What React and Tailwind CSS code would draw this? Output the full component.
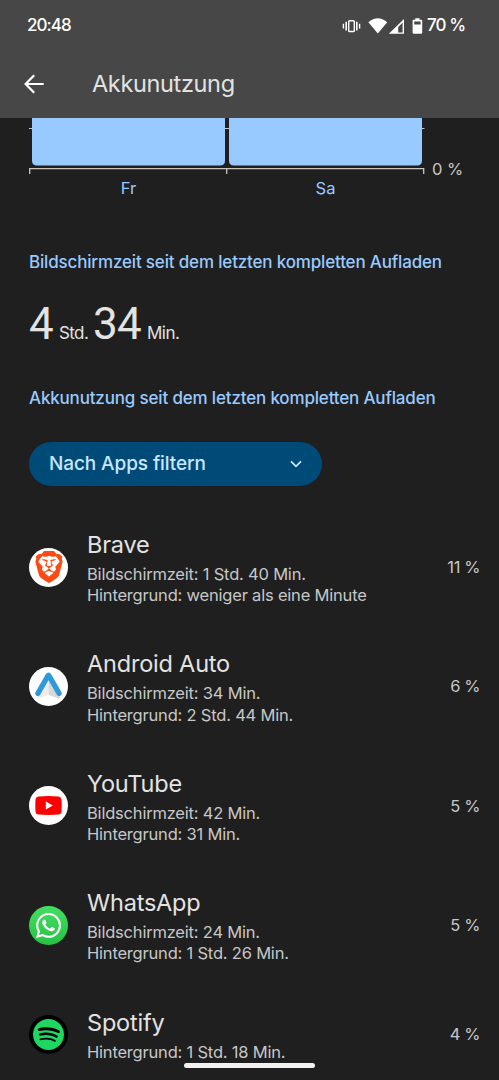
import { SiBrave, SiSpotify, SiWhatsapp } from "react-icons/si";

function BraveIcon() {
  return (
    <div className="flex size-[39px] items-center justify-center rounded-full bg-white">
      <SiBrave className="size-[32px] text-[#fb4a14]" />
    </div>
  );
}

function AutoIcon() {
  return (
    <svg className="size-[39px]" viewBox="0 0 39 39">
      <circle cx="19.5" cy="19.5" r="19.5" fill="#fff" />
      <path d="M19.5 13 8 30.2q-.3 1.6 1.2 1.3l10.3-3.6z" fill="#ececec" />
      <path d="M19.5 13 31 30.2q.3 1.6-1.2 1.3l-10.3-3.6z" fill="#d9d9d9" />
      <path d="M8.9 26.4 19.2 8.4q.3-.6.6 0l10.3 18" fill="none" stroke="#2d98da" strokeWidth="5.2" strokeLinecap="round" strokeLinejoin="round" />
    </svg>
  );
}

function YouTubeIcon() {
  return (
    <svg className="size-[39px]" viewBox="0 0 39 39">
      <circle cx="19.5" cy="19.5" r="19.5" fill="#fff" />
      <path d="M9.5 10.5Q19.5 9.7 29.5 10.5 32.2 10.8 32.5 13.6 33 19.5 32.5 25.4 32.2 28.2 29.5 28.5 19.5 29.3 9.5 28.5 6.8 28.2 6.5 25.4 6 19.5 6.5 13.6 6.8 10.8 9.5 10.5z" fill="#f00" />
      <path d="M16.8 15.4v8.2l7-4.1z" fill="#fff" />
    </svg>
  );
}

function WhatsAppIcon() {
  return (
    <div className="flex size-[39px] items-center justify-center rounded-full bg-linear-to-b from-[#43df62] to-[#25c244]">
      <SiWhatsapp className="size-[25px] text-white" />
    </div>
  );
}

function SpotifyIcon() {
  return (
    <div className="flex size-[39px] items-center justify-center rounded-full bg-black">
      <SiSpotify className="size-[31px] text-[#1ed760]" />
    </div>
  );
}

const apps = [
  { name: "Brave", lines: ["Bildschirmzeit: 1 Std. 40 Min.", "Hintergrund: weniger als eine Minute"], pct: "11 %", Icon: BraveIcon },
  { name: "Android Auto", lines: ["Bildschirmzeit: 34 Min.", "Hintergrund: 2 Std. 44 Min."], pct: "6 %", Icon: AutoIcon },
  { name: "YouTube", lines: ["Bildschirmzeit: 42 Min.", "Hintergrund: 31 Min."], pct: "5 %", Icon: YouTubeIcon },
  { name: "WhatsApp", lines: ["Bildschirmzeit: 24 Min.", "Hintergrund: 1 Std. 26 Min."], pct: "5 %", Icon: WhatsAppIcon },
  { name: "Spotify", lines: ["Hintergrund: 1 Std. 18 Min."], pct: "4 %", Icon: SpotifyIcon },
];

function StatusIcons() {
  return (
    <svg className="h-[20px] w-[84px]" viewBox="340 15 84 20" fill="#fff">
      <rect x="348.7" y="19.7" width="5.6" height="10.8" rx="0.8" fill="none" stroke="#fff" strokeWidth="1.4" />
      <path d="M345.4 20.8h1.6v8.6h-1.6zM342.7 22.8h1.4v4.6h-1.4zM356 20.8h1.6v8.6H356zM358.9 22.8h1.4v4.6h-1.4z" />
      <path d="M368.4 21.2Q377.8 13.5 387.2 21.2L377.8 32.6z" />
      <path fillRule="evenodd" d="M404 18v14.8h-15.2zM402.6 21.8l-4.4 4.3v5.3h4.4z" />
      <path fillRule="evenodd" d="M415.3 17.2h4.2v1.6h1.7q1 0 1 1v11.7q0 1.2-1 1.2h-7.6q-1 0-1-1.2V19.8q0-1 1-1h1.7zM414.2 20.4v3.2h6.4v-3.2z" />
    </svg>
  );
}

export default function App() {
  return (
    <div className="relative h-[1080px] w-[499px] overflow-hidden bg-[#1f1f1f] font-['Inter','Roboto',sans-serif] text-[#e3e3e3]">
      <header className="h-[118px] bg-[#474747]">
        <div className="flex h-[51px] items-center pl-[27px] text-white">
          <span className="w-[313px] text-[17px] font-medium tracking-[-0.95px]">20:48</span>
          <StatusIcons />
          <span className="pl-[3px] text-[17px] font-medium whitespace-nowrap tracking-[-0.9px]">70 %</span>
        </div>
        <div className="flex h-[66px] items-center pl-[24px]">
          <svg className="h-[20px] w-[20px]" viewBox="0 0 20 20" fill="none" stroke="#fff" strokeWidth="2.2">
            <path d="M19.7 10H2M10.2 1.2 1.6 10l8.6 8.8" />
          </svg>
          <h1 className="pl-[48px] text-[23.5px] leading-[30px] font-normal tracking-[-0.35px]">Akkunutzung</h1>
        </div>
      </header>

      <section className="h-[128px]">
        <div className="flex">
          <svg className="h-[60px] w-[432px]" viewBox="0 118 432 60">
            <path d="M29 128.5h3M225 128.5h4M422 128.5h2.5" stroke="#c9c6bf" strokeWidth="1.2" />
            <path d="M32 118h193v42.5q0 5-5 5H37q-5 0-5-5zM229 118h193v42.5q0 5-5 5H234q-5 0-5-5z" fill="#99caff" />
            <path d="M29.7 174v-5.4h394v5.4M226.7 168.6v5.4" fill="none" stroke="#c9c6bf" strokeWidth="1.3" />
          </svg>
          <span className="pt-[41px] text-[16.5px] leading-[20px] whitespace-nowrap text-[#c7c7c7]">0 %</span>
        </div>
        <div className="-mt-px flex h-[20px] pl-[30px] text-center text-[16.5px] leading-[20px] text-[#99caff]">
          <span className="w-[197px]">Fr</span>
          <span className="w-[197px]">Sa</span>
        </div>
      </section>

      <main className="pl-[29px]">
        <h2 className="h-[32px] text-[17px] leading-[32px] font-medium whitespace-nowrap tracking-[-0.17px] text-[#99caff]">Bildschirmzeit seit dem letzten kompletten Aufladen</h2>
        <p className="flex h-[104px] items-baseline pt-[16px] text-[17px] leading-[60px] whitespace-nowrap">
          <span className="w-[30px] font-['Roboto','Inter',sans-serif] text-[44px]">4</span>
          <span className="w-[34px] tracking-[-0.6px]">Std.</span>
          <span className="w-[54px] font-['Roboto','Inter',sans-serif] text-[44px] tracking-[-0.8px]">34</span>
          <span className="tracking-[-0.5px]">Min.</span>
        </p>
        <h2 className="h-[32px] text-[17px] leading-[32px] font-medium whitespace-nowrap tracking-[-0.17px] text-[#99caff]">Akkunutzung seit dem letzten kompletten Aufladen</h2>
        <button className="mt-[28px] flex h-[44px] w-[293px] items-center justify-between rounded-full bg-[#004a77] pr-[20px] pl-[20px] text-[#c9e6ff]">
          <span className="text-[19px] font-medium tracking-[-0.1px]">Nach Apps filtern</span>
          <svg className="h-[12px] w-[12px]" viewBox="0 0 12 12" fill="none" stroke="currentColor" strokeWidth="1.8">
            <path d="M1 3.3 6 8.3l5-5" />
          </svg>
        </button>

        <ul className="mt-[44px]">
          {apps.map(({ name, lines, pct, Icon }) => (
            <li key={name} className="flex h-[119.4px] items-start pr-[19px]">
              <div className={lines.length === 1 ? "pt-[7px]" : "pt-[17.5px]"}>
                <Icon />
              </div>
              <div className="grow pl-[19px] whitespace-nowrap">
                <h3 className="h-[34px] text-[23.5px] leading-[30px] font-normal tracking-[-0.2px]">{name}</h3>
                {lines.map((line) => (
                  <p key={line} className="h-[21.3px] text-[16.5px] leading-[21.3px] tracking-[-0.2px] text-[#c7c7c7]">{line}</p>
                ))}
              </div>
              <span className={lines.length === 1 ? "pt-[16px] text-[16.5px] leading-[21px] tracking-[-0.4px] text-[#c7c7c7]" : "pt-[27px] text-[16.5px] leading-[21px] tracking-[-0.4px] text-[#c7c7c7]"}>{pct}</span>
            </li>
          ))}
        </ul>
      </main>
      <div className="absolute top-[1063px] left-[184px] h-[5px] w-[131px] rounded-full bg-[#f2f2f2]" />
    </div>
  );
}
